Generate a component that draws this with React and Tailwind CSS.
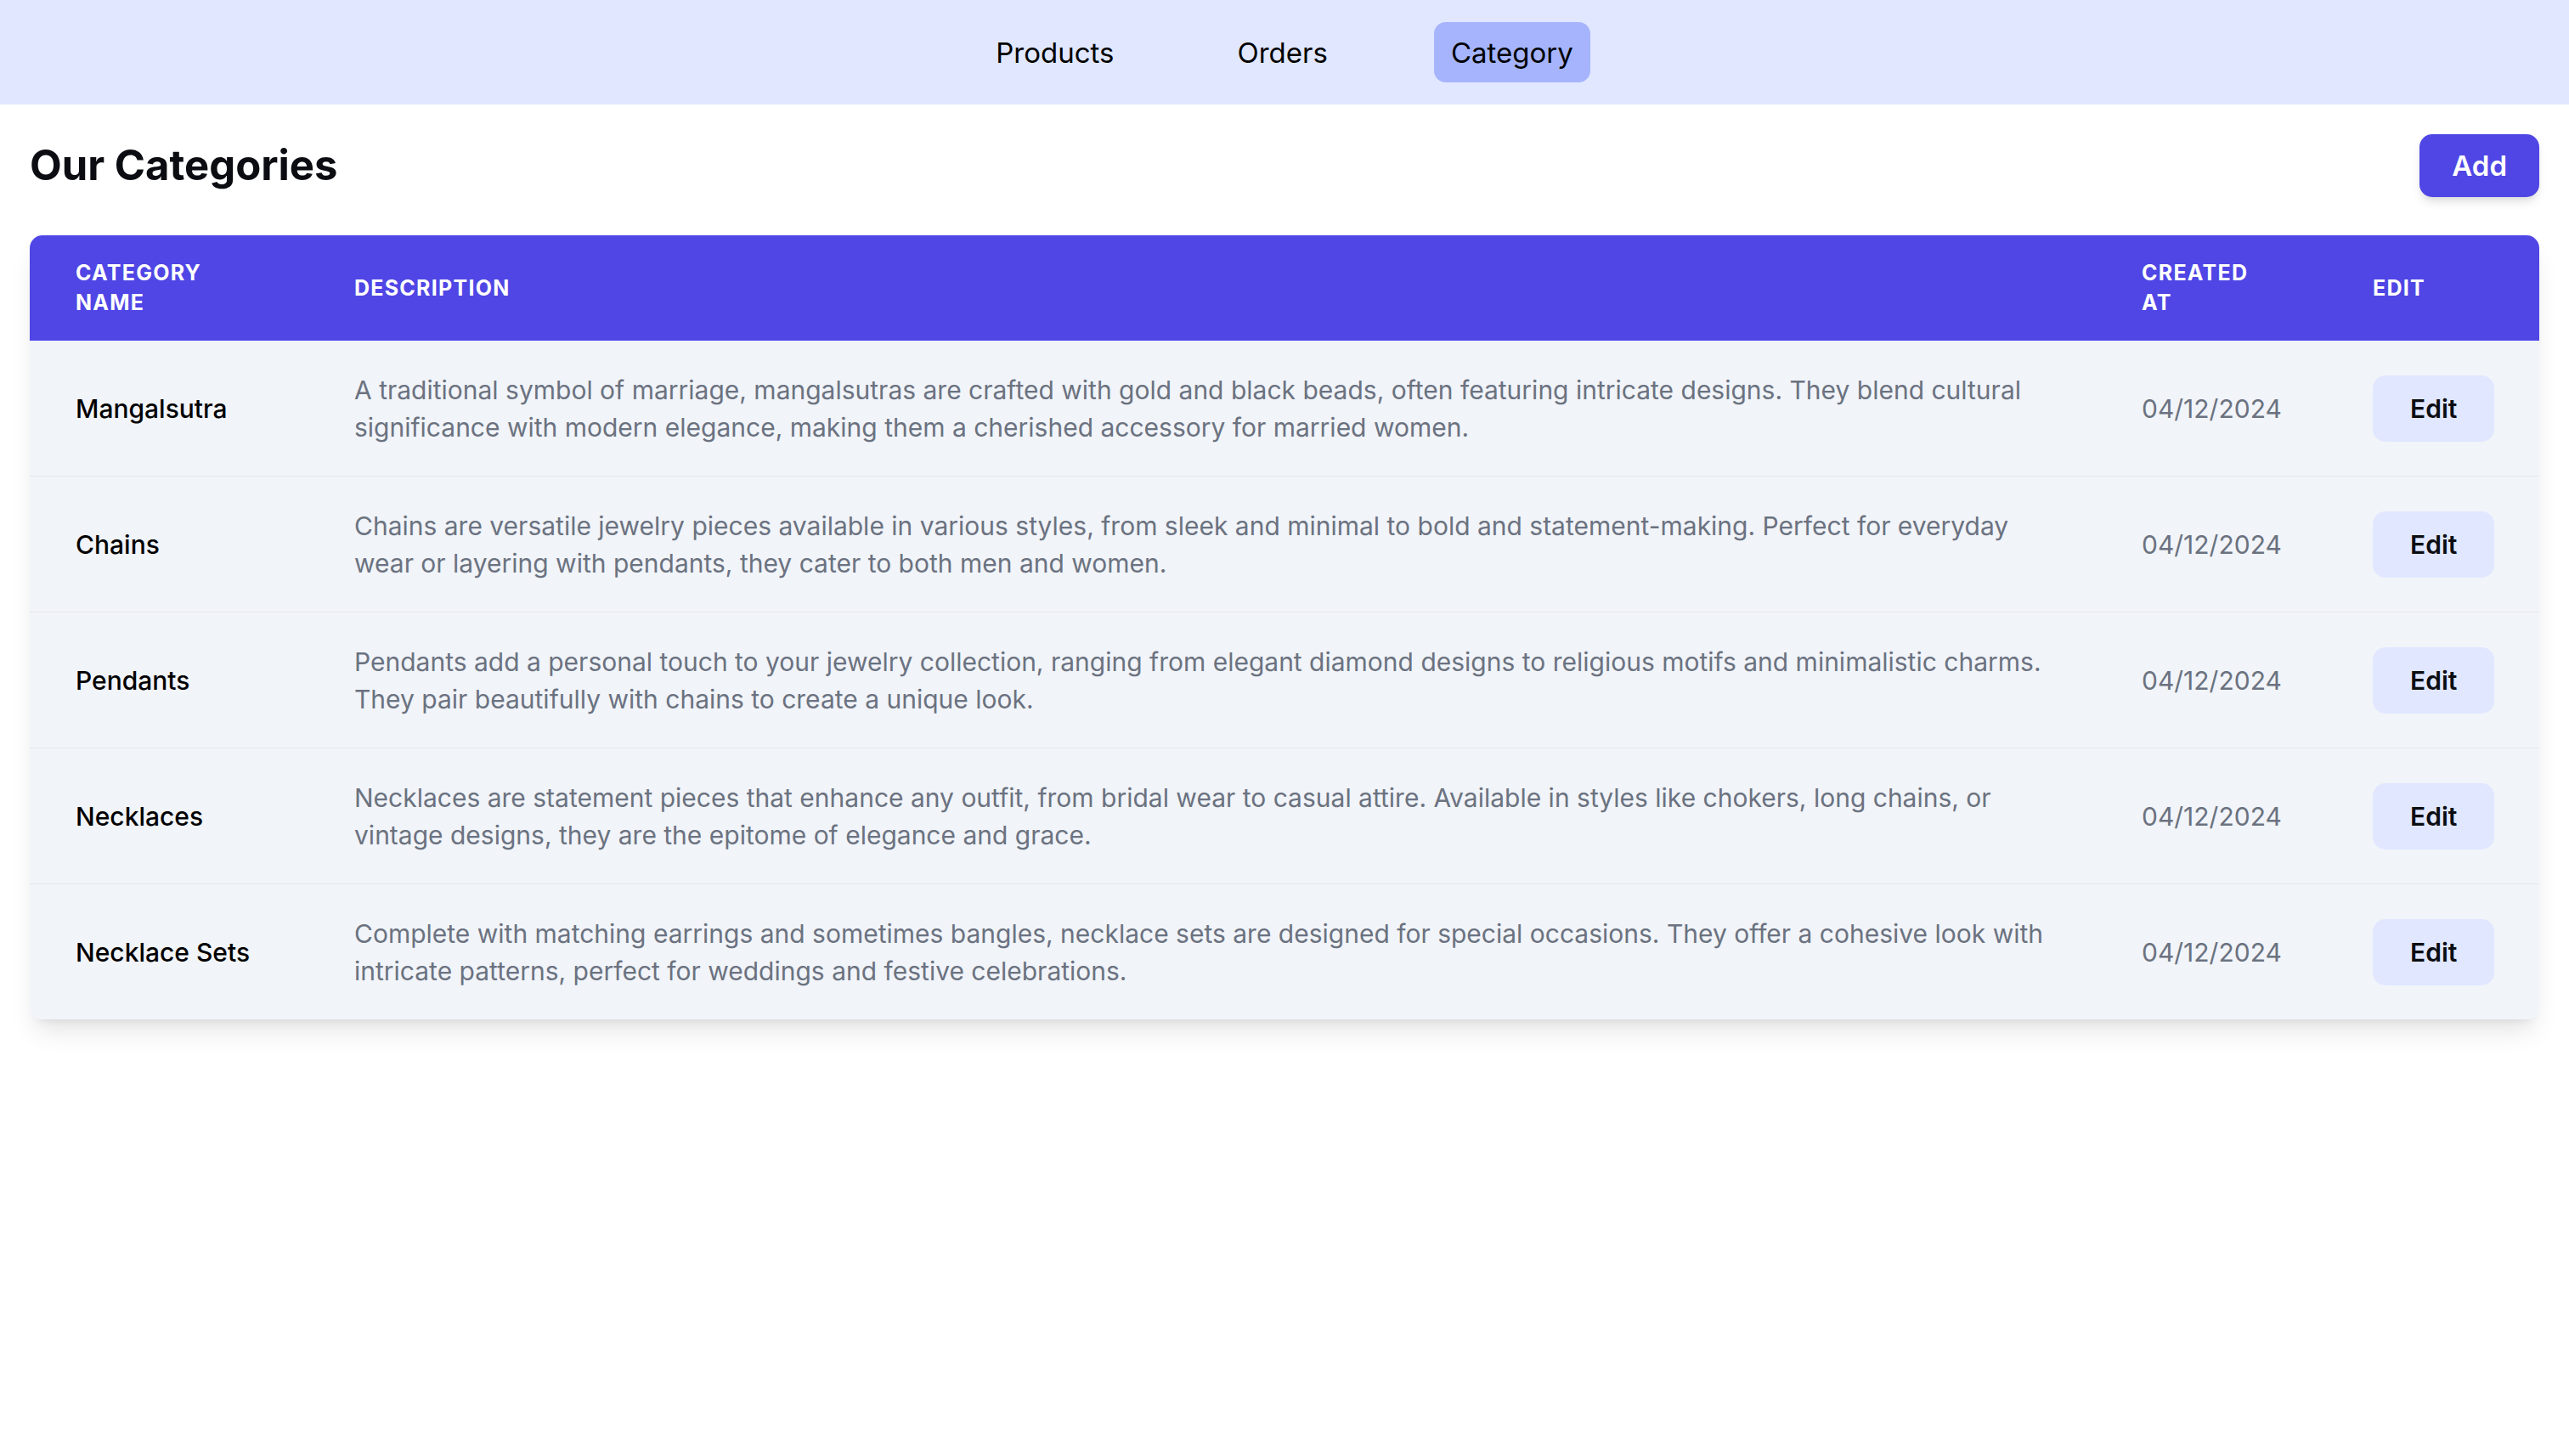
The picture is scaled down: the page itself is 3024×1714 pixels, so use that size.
import React from 'react';

const categories = [
  {
    name: 'Mangalsutra',
    description:
      'A traditional symbol of marriage, mangalsutras are crafted with gold and black beads, often featuring intricate designs. They blend cultural significance with modern elegance, making them a cherished accessory for married women.',
    createdAt: '04/12/2024',
  },
  {
    name: 'Chains',
    description:
      'Chains are versatile jewelry pieces available in various styles, from sleek and minimal to bold and statement-making. Perfect for everyday wear or layering with pendants, they cater to both men and women.',
    createdAt: '04/12/2024',
  },
  {
    name: 'Pendants',
    description:
      'Pendants add a personal touch to your jewelry collection, ranging from elegant diamond designs to religious motifs and minimalistic charms. They pair beautifully with chains to create a unique look.',
    createdAt: '04/12/2024',
  },
  {
    name: 'Necklaces',
    description:
      'Necklaces are statement pieces that enhance any outfit, from bridal wear to casual attire. Available in styles like chokers, long chains, or vintage designs, they are the epitome of elegance and grace.',
    createdAt: '04/12/2024',
  },
  {
    name: 'Necklace Sets',
    description:
      'Complete with matching earrings and sometimes bangles, necklace sets are designed for special occasions. They offer a cohesive look with intricate patterns, perfect for weddings and festive celebrations.',
    createdAt: '04/12/2024',
  },
];

const navItems = ['Products', 'Orders', 'Category'];

const App = () => {
  return (
    <div className="min-h-screen bg-white font-['Inter','Noto_Sans',sans-serif] text-[#0b0d12]">
      {/* Navbar */}
      <nav className="h-[123px] bg-[#e0e7ff] flex items-center justify-center gap-[105px]">
        {navItems.map((item) => (
          <a
            key={item}
            href="#"
            className={`h-[71px] flex items-center px-[20px] rounded-[14px] text-[33px] leading-[50px] text-black ${
              item === 'Category' ? 'bg-[#a5b4fc]' : ''
            }`}
          >
            {item}
          </a>
        ))}
      </nav>

      <main className="px-[35px] pt-[35px]">
        {/* Title + Add */}
        <div className="flex items-center justify-between">
          <h1 className="text-[49px] leading-[60px] font-bold">Our Categories</h1>
          <button className="bg-[#4f46e5] text-white text-[33px] leading-[50px] font-semibold px-[38px] py-[12px] rounded-[15px] shadow-[0_8px_12px_-2px_rgba(0,0,0,0.1),0_4px_8px_-4px_rgba(0,0,0,0.1)]">
            Add
          </button>
        </div>

        {/* Table */}
        <div className="mt-[45px] rounded-[15px] overflow-hidden shadow-[0_20px_30px_-6px_rgba(0,0,0,0.1),0_8px_12px_-8px_rgba(0,0,0,0.1)]">
          <table className="w-full table-fixed border-collapse text-left">
            <colgroup>
              <col className="w-[328px]" />
              <col />
              <col className="w-[272px]" />
              <col className="w-[250px]" />
            </colgroup>
            <thead className="bg-[#4f46e5] text-white">
              <tr>
                {['Category Name', 'Description', 'Created At', 'Edit'].map((h) => (
                  <th
                    key={h}
                    className="px-[54px] py-[27px] text-[25px] leading-[35px] font-bold uppercase tracking-[0.05em] align-middle"
                  >
                    {h}
                  </th>
                ))}
              </tr>
            </thead>
            <tbody className="bg-[#f1f4f9]">
              {categories.map((c, i) => (
                <tr
                  key={c.name}
                  className={i < categories.length - 1 ? 'border-b border-[#e5e7eb]' : ''}
                >
                  <td className="px-[54px] py-[35.5px] text-[30px] leading-[44px] font-medium text-black align-middle">
                    {c.name}
                  </td>
                  <td className="px-[54px] py-[35.5px] text-[30px] leading-[44px] text-[#6b7280] align-middle">
                    {c.description}
                  </td>
                  <td className="px-[54px] py-[35.5px] text-[30px] leading-[44px] text-[#6b7280] align-middle">
                    {c.createdAt}
                  </td>
                  <td className="px-[54px] py-[35.5px] align-middle">
                    <button className="bg-[#e0e7ff] text-[#0b0d12] text-[30px] leading-[44px] font-semibold px-[44px] py-[17px] rounded-[15px]">
                      Edit
                    </button>
                  </td>
                </tr>
              ))}
            </tbody>
          </table>
        </div>
      </main>
    </div>
  );
};

export default App;
